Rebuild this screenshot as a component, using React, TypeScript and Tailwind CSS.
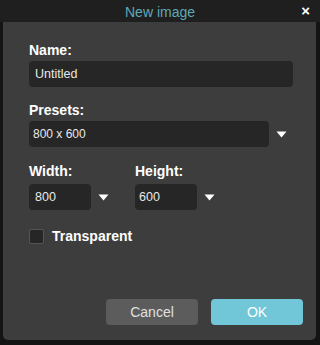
import React from "react";

const Arrow = () => (
  <svg width="11" height="7" viewBox="0 0 11 7" className="shrink-0">
    <path d="M0.5 0.5 L10.5 0.5 L5.5 6.5 Z" fill="#ffffff" />
  </svg>
);

export default function App() {
  return (
    <div
      className="w-[320px] h-[345px] bg-[#141414] flex flex-col overflow-hidden"
      style={{ fontFamily: '"Liberation Sans", Arial, sans-serif' }}
    >
      <div className="h-[22px] bg-[#1f1f1f] flex items-center justify-center relative shrink-0">
        <span className="text-[14px] text-[#5ea9b7] leading-none mt-[1px]">New image</span>
        <span className="absolute right-[10px] top-[3px] text-white font-bold text-[15px] leading-none">×</span>
      </div>
      <div className="ml-[3px] mr-[4px] h-[318px] bg-[#3d3d3d] rounded-b-[5px] flex flex-col pl-[26px]">
        <div className="mt-[20px] text-white font-bold text-[14px] leading-[16px]">Name:</div>
        <div className="mt-[3px] w-[264px] h-[26px] bg-[#262626] rounded-[4px] flex items-center pl-[6px] text-[12.5px] text-[#e8e8e8]">
          Untitled
        </div>
        <div className="mt-[15px] text-white font-bold text-[14px] leading-[16px]">Presets:</div>
        <div className="mt-[3px] flex items-center gap-[7px]">
          <div className="w-[240px] h-[26px] bg-[#262626] rounded-[4px] flex items-center pl-[4px] text-[12px] text-[#e8e8e8]">
            800 x 600
          </div>
          <Arrow />
        </div>
        <div className="mt-[16px] flex">
          <div className="flex flex-col w-[106px]">
            <div className="text-white font-bold text-[14px] leading-[16px]">Width:</div>
            <div className="mt-[5px] flex items-center gap-[7px]">
              <div className="w-[62px] h-[26px] bg-[#262626] rounded-[4px] flex items-center pl-[6px] text-[12.5px] text-[#e8e8e8]">
                800
              </div>
              <Arrow />
            </div>
          </div>
          <div className="flex flex-col">
            <div className="text-white font-bold text-[14px] leading-[16px]">Height:</div>
            <div className="mt-[5px] flex items-center gap-[7px]">
              <div className="w-[62px] h-[26px] bg-[#262626] rounded-[4px] flex items-center pl-[4px] text-[12.5px] text-[#e8e8e8]">
                600
              </div>
              <Arrow />
            </div>
          </div>
        </div>
        <div className="mt-[18px] flex items-center gap-[8px]">
          <div className="w-[15px] h-[15px] bg-[#262626] border border-[#555] rounded-[2px]" />
          <span className="text-white font-bold text-[14px] leading-[16px]">Transparent</span>
        </div>
        <div className="mt-auto mb-[15px] mr-[13px] flex justify-end gap-[13px]">
          <button className="w-[92px] h-[26px] bg-[#5c5c5c] rounded-[4px] text-[#e0e0e0] text-[14px] flex items-center justify-center">
            Cancel
          </button>
          <button className="w-[92px] h-[26px] bg-[#71c7d8] rounded-[4px] text-white text-[14px] flex items-center justify-center">
            OK
          </button>
        </div>
      </div>
    </div>
  );
}
